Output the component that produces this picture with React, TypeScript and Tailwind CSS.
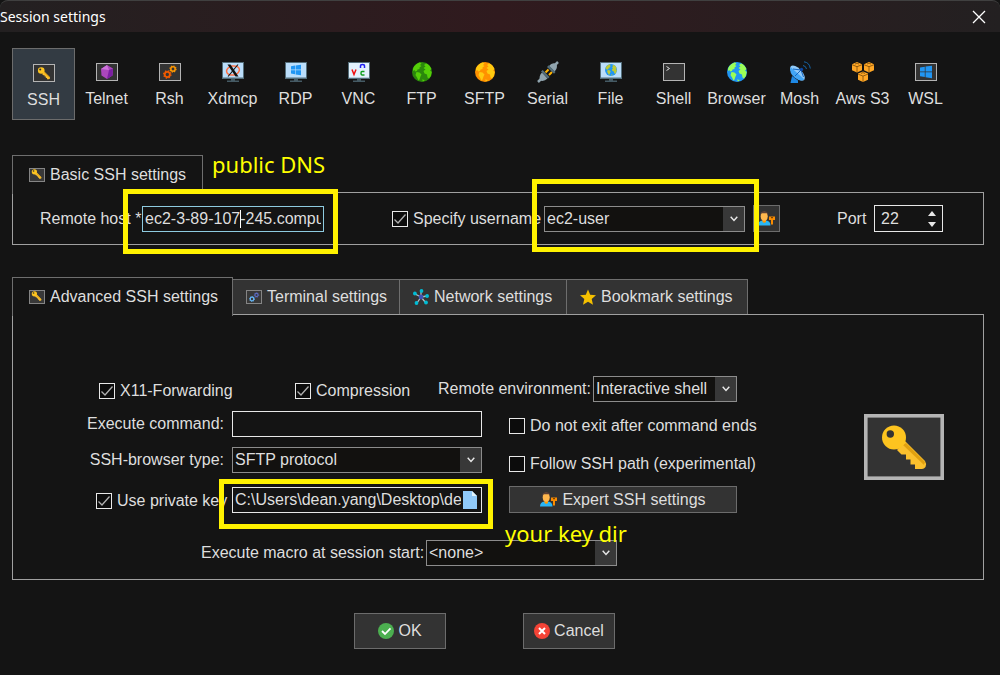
import { useState, type ReactNode } from "react";

const KeyShape = () => (
  <>
    <path d="M41 27 L61 47 Q63 50 61.500 53 Q60 55 58 55 H51 V50.500 H46.500 V45.500 H42 V40.500 H37.500 L33 36 Z" fill="#fbc02d" />
    <path d="M42 29 L61 48 L60 51 L39 31 Z" fill="#e0a010" />
    <circle cx="30" cy="23.500" r="12" fill="#fdc41f" />
    <circle cx="26.300" cy="20" r="3.700" fill="#333" />
  </>
);

const Frame = ({ children }: { children?: ReactNode }) => (
  <svg viewBox="0 0 22 18" className="h-[18px] w-[22px]" aria-hidden="true">
    <rect x=".5" y=".5" width="21" height="17" fill="#333" stroke="#b4b4b4" />
    {children}
  </svg>
);

const SmallFrame = ({ children }: { children?: ReactNode }) => (
  <svg viewBox="0 0 16 14" className="h-3.5 w-4 shrink-0" aria-hidden="true">
    <rect x=".5" y=".5" width="15" height="13" fill="#383838" stroke="#858585" />
    {children}
  </svg>
);

const SmallKey = () => (
  <SmallFrame>
    <g transform="translate(-1.200 -1.400) scale(.22)">
      <KeyShape />
    </g>
  </SmallFrame>
);

const Monitor = ({ children }: { children?: ReactNode }) => (
  <svg viewBox="0 0 22 20" className="h-5 w-[22px]" aria-hidden="true">
    <path d="M9 16h4v2.500h4V20H5v-1.500h4z" fill="#455a64" />
    <rect width="22" height="17" fill="#546e7a" />
    <rect x="1" y="1" width="20" height="14.500" fill="#bbdefb" />
    {children}
  </svg>
);

const Land = ({ fill }: { fill: string }) => (
  <g fill={fill}>
    <path d="M2 4.500 Q4 1.500 8 .3 L9.500 1.500 8 3 9.500 4 7.500 5.500 7.500 7 5.500 7.500 5 9 3 9.500 2.500 8 1 9 Q.8 6.500 2 4.500Z" />
    <path d="M4.500 10 7.500 10.500 9.500 12.500 8.500 14.500 7.500 17.500 6.500 18.500 5 15.500 3.500 13Z" />
    <path d="M12 3 14 1.500 15.500 2 Q18.500 4 19.500 7 L18 8.500 19.700 10 Q19.500 14 17 16.500 L15.500 15.500 15 12.500 12.500 11.500 11.500 9 13.500 7.500 11.500 6 13.500 4.500Z" />
    <path d="M10 17.500 13 18 11 19.500Z" />
  </g>
);

const Globe = ({ sea, land }: { sea: string; land: string }) => (
  <svg viewBox="0 0 20 20" className="h-5 w-5" aria-hidden="true">
    <circle cx="10" cy="10" r="10" fill={sea} />
    <Land fill={land} />
  </svg>
);

const Gear = ({ x, y, color, r = 2.6 }: { x: number; y: number; color: string; r?: number }) => (
  <g stroke={color} fill="none">
    <circle cx={x} cy={y} r={r} strokeWidth={r * 0.7} />
    <circle cx={x} cy={y} r={r * 1.4} strokeWidth={r * 0.5} strokeDasharray={`${r * 0.55} ${r * 0.55}`} />
  </g>
);

const WindowsLogo = ({ scale = 1 }: { scale?: number }) => (
  <g transform={`translate(11 ${scale === 1 ? 8 : 9}) scale(${scale})`} fill="#2196f3">
    <path d="M-5 -3.700 -1 -4.400 V-.4 H-5Z M-.4 -4.500 5 -5.300 V-.4 H-.4Z M-5 .3 H-1 V4.200 L-5 3.600Z M-.4 .3 H5 V5.200 L-.4 4.400Z" />
  </g>
);

const PlugIcon = () => (
  <svg viewBox="0 0 22 22" className="h-[22px] w-[22px]" aria-hidden="true">
    <path d="M8.500 11.500 11.500 8.500 M12 14 15 11" stroke="#ffb300" strokeWidth="2" />
    <path d="M1 21 4 18" stroke="#90a4ae" strokeWidth="2.500" />
    <path d="M3 19.500 Q1.500 15 5 11.500 L10.500 17.500 Q7 21 3 19.500Z" fill="#90a4ae" />
    <path d="M4 10.500 5.700 9 12.500 16 11 17.500Z" fill="#546e7a" />
    <path d="M18 4 21 1" stroke="#90a4ae" strokeWidth="2.500" />
    <path d="M19.500 3 Q21 7 17.500 10.500 L12 5 Q15 1 19.500 3Z" fill="#90a4ae" />
    <path d="M10 6 11.700 4.300 18.500 11 17 12.700Z" fill="#546e7a" />
  </svg>
);

const DishIcon = () => (
  <svg viewBox="0 0 22 22" className="h-[22px] w-[22px]" aria-hidden="true">
    <path d="M3 15 9 19.500 V22 H1.500Z" fill="#1e88e5" />
    <ellipse cx="8.500" cy="12" rx="4.500" ry="9.500" transform="rotate(-43 8.500 12)" fill="#90caf9" />
    <path d="M1.500 6 Q0 12 5.500 16.500 Q11 21 15.500 18.500Z" fill="#42a5f5" />
    <path d="M4 8 12 9 14.500 16 M12 9 6 15" stroke="#1565c0" fill="none" />
    <circle cx="12.500" cy="8.500" r="1.700" fill="#0d47a1" />
    <path d="M14 4.500 Q17 5 17.500 8 M15 .8 Q20.500 1.500 21.300 7.500" stroke="#1565a8" fill="none" />
  </svg>
);

const Cube = ({ x, y }: { x: number; y: number }) => (
  <g transform={`translate(${x} ${y})`}>
    <path d="M5 0 10 2.200 V8.300 L5 10.500 0 8.300 V2.200Z" fill="#ffa726" />
    <path d="M0 2.700 5 4.700 10 2.700 M5 4.700 V10.500 M3 2 5 1.200 7 2" stroke="#7a4a08" strokeWidth=".8" fill="none" />
  </g>
);

const UserKey = () => (
  <svg viewBox="0 0 18 15" className="h-[15px] w-[18px]" aria-hidden="true">
    <path d="M0 14.500 Q0 10 4.500 9.500 H8 Q12.500 10 12.500 14.500Z" fill="#29b6f6" />
    <path d="M4.500 8.500 H8 V11 L6.200 12 4.500 11Z" fill="#ff9800" />
    <ellipse cx="6.200" cy="5.200" rx="3.500" ry="4.500" fill="#ffb74d" />
    <path d="M2.500 4.500 Q2 .3 6.500 .3 Q10.500 .5 10 4.500 L9 2.200 3.500 2.200Z" fill="#5d4037" />
    <path d="M11 5.500 H17 V9 H15 V13.500 H13 V9 H11Z" fill="#fb8c00" />
    <path d="M13 6.700 H15" stroke="#5b3200" />
  </svg>
);

const sessions: { name: string; icon: ReactNode }[] = [
  { name: "SSH", icon: <Frame><g transform="scale(.275)"><KeyShape /></g></Frame> },
  {
    name: "Telnet",
    icon: (
      <Frame>
        <path d="M11 2 17 5.500 16.500 12.500 11 16 5.500 12.500 5 6Z" fill="#ab47bc" />
        <path d="M11 2 5 6 13 7Z" fill="#ce74dc" />
        <path d="M13 7 17 5.500 16.500 12.500Z M13 7 11 16 16.500 12.500Z" fill="#7b1fa2" />
      </Frame>
    ),
  },
  { name: "Rsh", icon: <Frame><Gear x={8.3} y={11.5} color="#f05a00" /><Gear x={14} y={6} color="#ff9800" r={2.2} /></Frame> },
  {
    name: "Xdmcp",
    icon: (
      <Monitor>
        <ellipse cx="11" cy="8.500" rx="6.500" ry="4.500" transform="rotate(-12 11 8.500)" fill="none" stroke="#ff7043" strokeWidth="1.500" />
        <path d="M5.500 2.500 H8.500 L16.500 14.500 H13.500Z" fill="#111" />
        <path d="M16 2.500 6 14.500" stroke="#111" strokeWidth="1.100" />
      </Monitor>
    ),
  },
  { name: "RDP", icon: <Monitor><WindowsLogo /></Monitor> },
  {
    name: "VNC",
    icon: (
      <Monitor>
        <rect x="1" y="1" width="20" height="14.500" fill="#e3f2fd" />
        <path d="M4 7.500 6 12.500 8 7.500" stroke="#f01010" strokeWidth="1.500" fill="none" />
        <path d="M12.500 6 V4 Q12.500 2.500 14.500 2.500 T16.500 4 V6" stroke="#2020f0" strokeWidth="1.500" fill="none" />
        <path d="M16.500 9.500 H14 Q13 9.500 13 11.200 T14 13 H16.500" stroke="#10a020" strokeWidth="1.500" fill="none" />
      </Monitor>
    ),
  },
  { name: "FTP", icon: <Globe sea="#2b870c" land="#55cf08" /> },
  { name: "SFTP", icon: <Globe sea="#ff9100" land="#ffca10" /> },
  { name: "Serial", icon: <PlugIcon /> },
  {
    name: "File",
    icon: (
      <Monitor>
        <circle cx="11" cy="8" r="6" fill="#2196f3" />
        <g transform="translate(5 2) scale(.6)"><Land fill="#c0ca33" /></g>
      </Monitor>
    ),
  },
  { name: "Shell", icon: <Frame><path d="M3.500 3.500 6.500 5.500 3.500 7.500" stroke="#ddd" fill="none" /></Frame> },
  { name: "Browser", icon: <Globe sea="#2196f3" land="#9cff57" /> },
  { name: "Mosh", icon: <DishIcon /> },
  {
    name: "Aws S3",
    icon: (
      <svg viewBox="0 0 22 20" className="h-5 w-[22px]" aria-hidden="true">
        <Cube x={0} y={0} />
        <Cube x={12} y={0} />
        <Cube x={6} y={9.4} />
      </svg>
    ),
  },
  { name: "WSL", icon: <Frame><WindowsLogo scale={1.2} /></Frame> },
];

const Highlight = ({ className }: { className: string }) => (
  <span aria-hidden="true" className={`pointer-events-none absolute z-20 border-[5px] border-[#fff200] ${className}`} />
);

const Note = ({ className, children }: { className: string; children: ReactNode }) => (
  <span className={`pointer-events-none absolute z-20 font-['Noto_Sans',sans-serif] text-[22px] leading-8 whitespace-nowrap text-[#ffff00] ${className}`}>
    {children}
  </span>
);

const Check = ({ id, label, on = false }: { id: string; label: string; on?: boolean }) => (
  <div className="flex items-center gap-[5px]">
    <span className="relative flex size-4 shrink-0">
      <input id={id} type="checkbox" defaultChecked={on} className="peer size-4 appearance-none border border-[#e8e8e8] bg-[#0c0c0c]" />
      <svg viewBox="0 0 16 16" className="pointer-events-none absolute inset-0 hidden size-4 peer-checked:block" aria-hidden="true">
        <path d="M2.500 8.500 6 12 13.500 3.500" fill="none" stroke="#b0b0b0" strokeWidth="1.300" />
      </svg>
    </span>
    <label htmlFor={id} className="whitespace-nowrap">{label}</label>
  </div>
);

const Choice = ({ id, options, width }: { id: string; options: string[]; width: string }) => (
  <div className={`relative h-[26px] shrink-0 ${width}`}>
    <select id={id} className="block h-full w-full appearance-none border border-[#8c8c8c] bg-[#12110f] pr-6 pl-0.5 outline-none">
      {options.map((o) => (
        <option key={o}>{o}</option>
      ))}
    </select>
    <span className="pointer-events-none absolute inset-y-px right-px flex w-[21px] items-center justify-center bg-[#383838]">
      <svg viewBox="0 0 8 6" className="h-1.5 w-2" aria-hidden="true">
        <path d="M.7 .7 4 4.500 7.300 .7" fill="none" stroke="#e8e8e8" strokeWidth="1.400" />
      </svg>
    </span>
  </div>
);

const tabs: { name: string; width: string; icon: ReactNode }[] = [
  { name: "Advanced SSH settings", width: "w-[221px]", icon: <SmallKey /> },
  {
    name: "Terminal settings",
    width: "w-[168px]",
    icon: <SmallFrame><Gear x={6} y={9} color="#64b5f6" r={1.8} /><Gear x={10.5} y={5} color="#5c6bc0" r={1.6} /></SmallFrame>,
  },
  {
    name: "Network settings",
    width: "w-[168px]",
    icon: (
      <svg viewBox="0 0 16 16" className="size-4 shrink-0" aria-hidden="true">
        <path d="M8 8 8 2 M8 8 2 5 M8 8 14 7 M8 8 4 14 M8 8 12.500 13.500" stroke="#b0bec5" strokeWidth="1.300" />
        <g fill="#00bcd4">
          <circle cx="8.500" cy="1.900" r="1.900" /><circle cx="1.900" cy="4.500" r="1.900" /><circle cx="14.100" cy="7" r="1.900" />
          <circle cx="3.500" cy="14" r="1.900" /><circle cx="13" cy="13.500" r="1.900" />
        </g>
        <circle cx="8" cy="8" r="2.400" fill="#3f51b5" />
      </svg>
    ),
  },
  {
    name: "Bookmark settings",
    width: "w-[182px]",
    icon: (
      <svg viewBox="0 0 16 16" className="size-4 shrink-0" aria-hidden="true">
        <path d="M8 .5 10.200 5.700 16 6.200 11.700 10 13 15.700 8 12.700 3 15.700 4.300 10 0 6.200 5.800 5.700Z" fill="#f5c000" />
      </svg>
    ),
  },
];

export default function App() {
  const [session, setSession] = useState("SSH");
  return (
    <div className="flex min-h-screen flex-col bg-[#141414] font-['Liberation_Sans',Arial,sans-serif] text-base leading-6 text-[#dedede]">
      <header className="flex h-8 items-center justify-between rounded-t-lg border-t border-[#404040] bg-linear-to-r from-[#232021] via-[#301a1e] to-[#232021] pr-3.5">
        <h1 className="font-['Noto_Sans',sans-serif] text-sm text-white">Session settings</h1>
        <button aria-label="Close" className="flex size-3.5 items-center justify-center">
          <svg viewBox="0 0 14 14" className="size-3.5" aria-hidden="true">
            <path d="M1 1 13 13 M13 1 1 13" stroke="#fff" strokeWidth="1.300" />
          </svg>
        </button>
      </header>

      <main className="flex flex-col pt-4 pr-4 pl-3">
        <nav className="flex" aria-label="Session type">
          {sessions.map((s) => (
            <button
              key={s.name}
              aria-pressed={s.name === session}
              onClick={() => setSession(s.name)}
              className={`flex h-[72px] w-[63px] shrink-0 flex-col items-center gap-1.5 pt-[15px] ${s.name === session ? "border border-[#6c6c6c] bg-[#333b43]" : ""}`}
            >
              <span className="flex h-[18px] items-center justify-center">{s.icon}</span>
              <span className="whitespace-nowrap">{s.name}</span>
            </button>
          ))}
        </nav>

        <section className="mt-[35px]">
          <div className="relative z-10 -mb-0.5 flex h-[39px] w-[191px] items-center gap-[5px] border border-b-0 border-[#6e6e6e] bg-[#141414] pl-4 whitespace-nowrap">
            <SmallKey />
            <h2>Basic SSH settings</h2>
            <Note className="bottom-3.5 left-[199px]">public DNS</Note>
          </div>
          <div className="grid h-[53px] grid-cols-[352fr_445fr_146fr] items-center border border-[#a0a0a0] pl-[27px]">
            <div className="flex items-center">
              <label htmlFor="host" className="w-[102px] whitespace-nowrap">Remote host *</label>
              <div className="relative w-[182px]">
                <input id="host" defaultValue="ec2-3-89-107-245.compute-1.amazonaws.com" className="block h-[26px] w-full border border-[#8ecbe0] bg-[#141414] px-0.5 outline-none" />
                <span aria-hidden="true" className="absolute inset-y-1 left-[98px] w-px bg-white" />
                <Highlight className="-top-[17px] -left-[19px] h-[65px] w-[215px]" />
              </div>
            </div>
            <div className="flex items-center">
              <div className="w-[152px]"><Check id="specify" label="Specify username" on /></div>
              <div className="relative">
                <Choice id="user" options={["ec2-user"]} width="w-[201px]" />
                <Highlight className="-top-[27px] -left-3 h-[73px] w-[227px]" />
              </div>
              <button aria-label="Manage users" className="ml-2 flex h-[27px] w-[27px] items-center justify-center border border-[#6c6c6c] bg-[#333]">
                <UserKey />
              </button>
            </div>
            <div className="flex items-center">
              <label htmlFor="port" className="w-[37px]">Port</label>
              <div className="flex h-[27px] w-[69px] items-center justify-between border border-[#e8e8e8] px-1.5">
                <input id="port" inputMode="numeric" defaultValue="22" className="w-8 bg-transparent outline-none" />
                <span className="flex flex-col gap-1.5">
                  <button aria-label="Increase port" className="flex"><svg viewBox="0 0 8 5" className="h-[5px] w-2"><path d="M0 5 4 0 8 5Z" fill="#e8e8e8" /></svg></button>
                  <button aria-label="Decrease port" className="flex"><svg viewBox="0 0 8 5" className="h-[5px] w-2"><path d="M0 0 4 5 8 0Z" fill="#e8e8e8" /></svg></button>
                </span>
              </div>
            </div>
          </div>
        </section>

        <section className="mt-8">
          <div role="tablist" className="flex items-end">
            {tabs.map((t, i) => (
              <button
                key={t.name}
                role="tab"
                aria-selected={i === 0}
                className={`flex items-center gap-[5px] border border-b-0 border-[#6e6e6e] whitespace-nowrap ${t.width} ${
                  i === 0 ? "relative z-10 -mb-0.5 h-[39px] bg-[#141414] pl-4" : "-ml-px h-[35px] bg-[#333] pl-[13px]"
                }`}
              >
                {t.icon}
                {t.name}
              </button>
            ))}
          </div>
          <div role="tabpanel" className="flex justify-between border border-[#a0a0a0] pt-[60px] pr-[39px] pb-[13px]">
            <div>
              <div className="flex items-center pl-[86px]">
                <div className="w-[196px] pt-1"><Check id="x11" label="X11-Forwarding" on /></div>
                <div className="w-[143px] pt-1"><Check id="compression" label="Compression" on /></div>
                <label htmlFor="env" className="w-[155px] whitespace-nowrap">Remote environment:</label>
                <Choice id="env" options={["Interactive shell"]} width="w-36" />
              </div>
              <div className="mt-2 flex gap-[27px]">
                <div className="grid grid-cols-[211px_250px] items-center gap-x-2">
                  <label htmlFor="command" className="text-right">Execute command:</label>
                  <input id="command" className="h-[26px] border border-[#e8e8e8] bg-[#141414] px-0.5 outline-none" />
                  <label htmlFor="browser" className="mt-2.5 text-right">SSH-browser type:</label>
                  <div className="mt-2.5"><Choice id="browser" options={["SFTP protocol"]} width="w-full" /></div>
                  <div className="mt-4 pl-[83px]"><Check id="usekey" label="Use private key" on /></div>
                  <div className="relative mt-3.5 flex h-[26px] items-center border border-[#e8e8e8] bg-[#141414] pr-1 pl-0.5">
                    <input aria-label="Private key file" defaultValue="C:\Users\dean.yang\Desktop\demo.pem" className="mr-0.5 w-[226px] bg-transparent outline-none" />
                    <button aria-label="Choose file" className="flex">
                      <svg viewBox="0 0 14 18" className="h-[18px] w-3.5"><path d="M0 0H9L14 5V18H0Z" fill="#90caf9" /><path d="M9 0 14 5H9Z" fill="#e1f5fe" /></svg>
                    </button>
                    <Highlight className="-top-[9px] -left-3.5 h-[50px] w-[274px]" />
                  </div>
                </div>
                <div className="relative flex flex-col pt-[3px]">
                  <Check id="noexit" label="Do not exit after command ends" />
                  <div className="mt-3.5"><Check id="follow" label="Follow SSH path (experimental)" /></div>
                  <button className="mt-2.5 flex h-[27px] w-[228px] items-center justify-center gap-1 border border-[#6c6c6c] bg-[#333]">
                    <UserKey />
                    Expert SSH settings
                  </button>
                  <Note className="top-[106px] -left-1">your key dir</Note>
                </div>
              </div>
              <div className="mt-[27px] flex items-center pl-[188px]">
                <label htmlFor="macro" className="w-[225px] whitespace-nowrap">Execute macro at session start:</label>
                <Choice id="macro" options={["<none>"]} width="w-[191px]" />
              </div>
            </div>
            <svg viewBox="0 0 80 66" className="mt-[39px] h-[66px] w-20 shrink-0" aria-hidden="true">
              <rect x="1.800" y="1.800" width="76.400" height="62.400" fill="#333" stroke="#b4b4b4" strokeWidth="3.600" />
              <KeyShape />
            </svg>
          </div>
        </section>

        <footer className="mt-[33px] flex justify-center gap-[77px] pr-[27px] pb-6">
          <button className="flex h-9 w-[92px] items-center justify-center gap-1 border border-[#6c6c6c] bg-[#333]">
            <svg viewBox="0 0 16 16" className="size-4" aria-hidden="true"><circle cx="8" cy="8" r="8" fill="#4caf50" /><path d="M4 8 7 11 12.500 5.300" fill="none" stroke="#fff" strokeWidth="1.800" /></svg>
            OK
          </button>
          <button className="flex h-9 w-[92px] items-center justify-center gap-1 border border-[#6c6c6c] bg-[#333]">
            <svg viewBox="0 0 16 16" className="size-4" aria-hidden="true"><circle cx="8" cy="8" r="8" fill="#f44336" /><path d="M5 5 11 11 M11 5 5 11" fill="none" stroke="#fff" strokeWidth="2" /></svg>
            Cancel
          </button>
        </footer>
      </main>
    </div>
  );
}
